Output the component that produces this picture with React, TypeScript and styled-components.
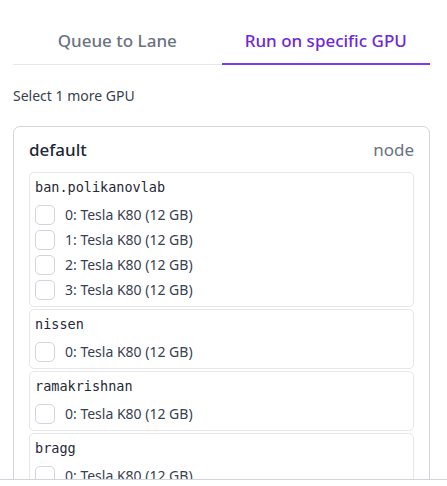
import styled, { createGlobalStyle } from 'styled-components';

const GlobalStyle = createGlobalStyle`
	html, body {
		margin: 0;
		padding: 0;
		background: #ffffff;
	}
	body {
		font-family: 'Noto Sans', 'Open Sans', sans-serif;
		color: #374151;
	}
`;

type Host = { name: string; gpus: string[] };

const hosts: Host[] = [
	{
		name: 'ban.polikanovlab',
		gpus: [
			'0: Tesla K80 (12 GB)',
			'1: Tesla K80 (12 GB)',
			'2: Tesla K80 (12 GB)',
			'3: Tesla K80 (12 GB)',
		],
	},
	{ name: 'nissen', gpus: ['0: Tesla K80 (12 GB)'] },
	{ name: 'ramakrishnan', gpus: ['0: Tesla K80 (12 GB)'] },
	{ name: 'bragg', gpus: ['0: Tesla K80 (12 GB)'] },
];

const Page = styled.div`
	display: flex;
	flex-direction: column;
	height: 100vh;
`;

const Body = styled.div`
	flex: 1;
	overflow: hidden;
	padding: 19px 17px 0 13px;
`;

const Footer = styled.div`
	height: 6px;
	border-top: 1px solid #d1d5db;
`;

const TabList = styled.div`
	display: grid;
	grid-template-columns: 1fr 1fr;
	border-bottom: 1px solid #e5e7eb;
`;

const Tab = styled.button<{ $active?: boolean }>`
	border: none;
	background: none;
	padding: 10px 0;
	margin-bottom: -1px;
	line-height: 24px;
	font-family: inherit;
	font-size: 17px;
	font-weight: 500;
	color: ${(p) => (p.$active ? '#6d28d9' : '#6b7280')};
	border-bottom: 2px solid ${(p) => (p.$active ? '#7c3aed' : 'transparent')};
	cursor: pointer;
`;

const Hint = styled.div`
	margin-top: 21px;
	font-size: 14px;
	line-height: 20px;
	color: #374151;
`;

const Card = styled.div`
	margin-top: 20px;
	border: 1px solid #d1d5db;
	border-radius: 7px;
	padding: 13px 15px 0 15px;
`;

const CardHeader = styled.div`
	display: flex;
	justify-content: space-between;
	align-items: center;
	height: 20px;
	line-height: 20px;
	margin-bottom: 12px;
`;

const CardTitle = styled.div`
	font-size: 17px;
	font-weight: 500;
	color: #1f2937;
`;

const CardMeta = styled.div`
	font-size: 17px;
	color: #6b7280;
`;

const HostList = styled.div`
	display: flex;
	flex-direction: column;
	gap: 2px;
`;

const HostBox = styled.div`
	border: 1px solid #e5e7eb;
	border-radius: 5px;
	padding: 4px 5px;
`;

const HostName = styled.div`
	font-family: 'DejaVu Sans Mono', monospace;
	font-size: 13.5px;
	line-height: 20px;
	color: #1f2937;
`;

const GpuList = styled.div`
	margin-top: 5px;
`;

const GpuRow = styled.label`
	display: flex;
	align-items: center;
	gap: 10px;
	height: 25px;
	font-size: 14px;
	color: #374151;
`;

const Check = styled.span`
	width: 18px;
	height: 18px;
	border: 1px solid #d1d5db;
	border-radius: 5px;
	background: #fff;
`;

export default function App() {
	return (
		<Page>
			<GlobalStyle />
			<Body>
				<TabList>
					<Tab>Queue to Lane</Tab>
					<Tab $active>Run on specific GPU</Tab>
				</TabList>
				<Hint>Select 1 more GPU</Hint>
				<Card>
					<CardHeader>
						<CardTitle>default</CardTitle>
						<CardMeta>node</CardMeta>
					</CardHeader>
					<HostList>
						{hosts.map((h) => (
							<HostBox key={h.name}>
								<HostName>{h.name}</HostName>
								<GpuList>
									{h.gpus.map((g) => (
										<GpuRow key={g}>
											<Check />
											{g}
										</GpuRow>
									))}
								</GpuList>
							</HostBox>
						))}
					</HostList>
				</Card>
			</Body>
			<Footer />
		</Page>
	);
}
